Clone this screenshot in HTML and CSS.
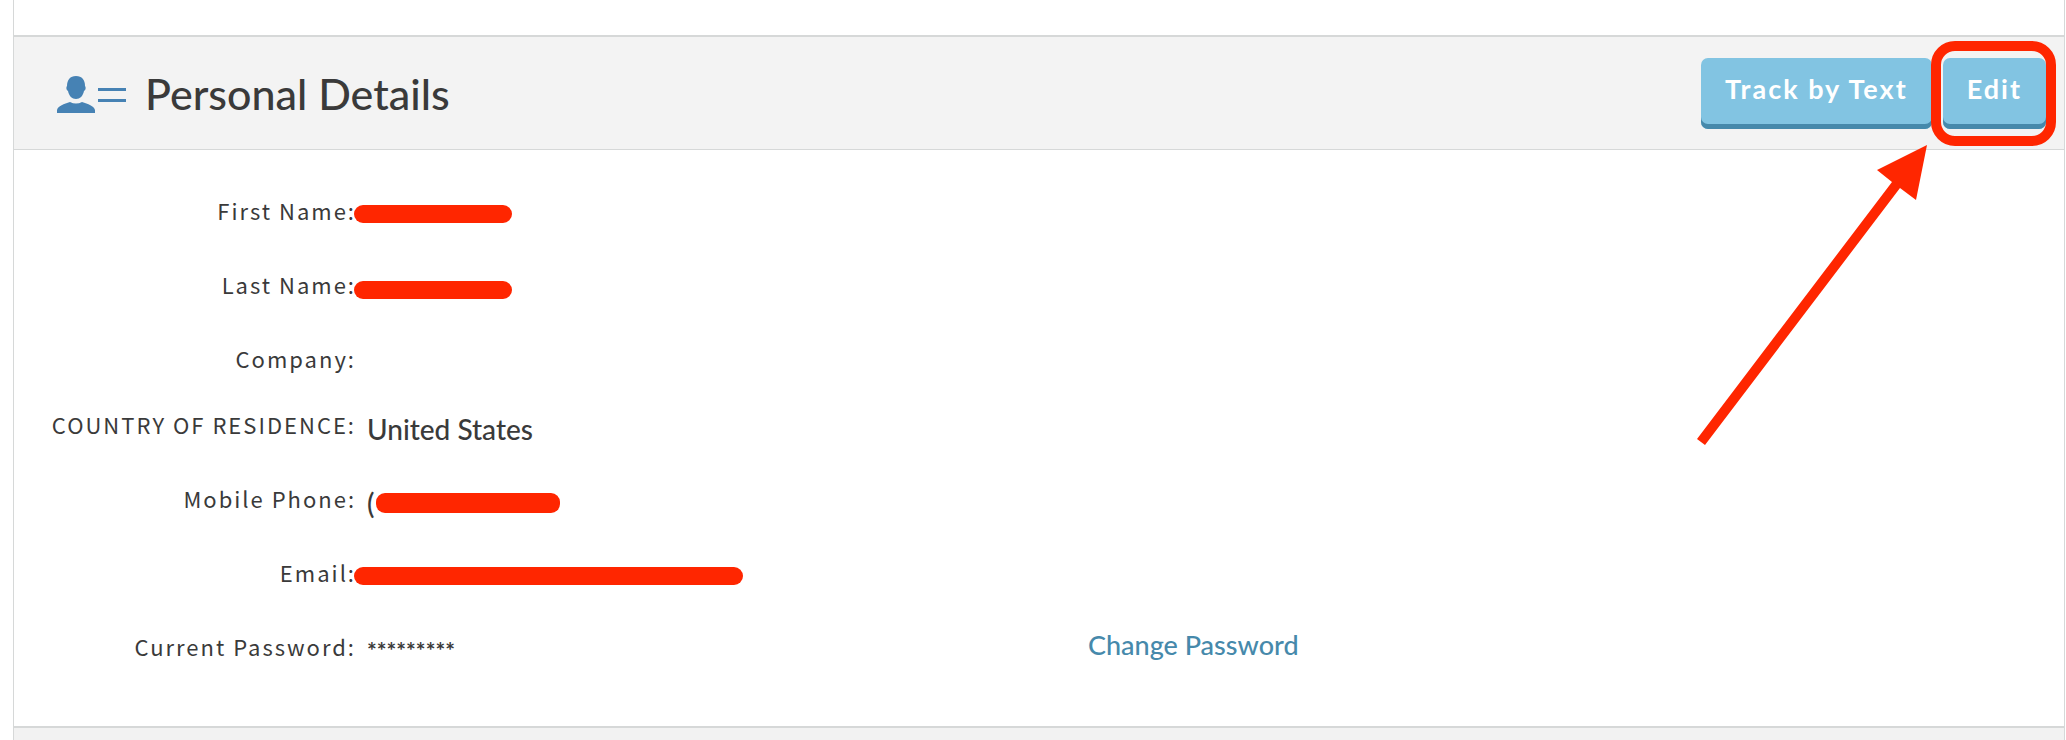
FILE: index.html
```html
<!DOCTYPE html>
<html lang="en">
<head>
<meta charset="utf-8">
<title>Personal Details</title>
<link rel="stylesheet" href="styles.css">
</head>
<body>
<main class="panel">
  <section class="section">
    <header class="section-header">
      <svg class="section-icon" viewBox="0 0 70 38" aria-hidden="true">
        <path d="M19 0c6 0 9 4 9 10 1 1 1 4-1 5-1 5-4 8-8 8s-7-3-8-8c-2-1-2-4-1-5 0-6 3-10 9-10z"/>
        <path d="M0 37v-3c1-4 7-6 13-8 4 2 8 2 12 0 6 2 12 4 13 8v3z"/>
        <path d="M41 12h28v3H41zM41 23h28v3H41z"/>
      </svg>
      <h1 class="section-title">Personal Details</h1>
      <div class="actions">
        <button class="button" type="button">Track by Text</button>
        <div class="highlighted">
          <button class="button" type="button">Edit</button>
          <span class="highlight-frame"></span>
          <svg class="highlight-arrow" viewBox="0 0 232 302" aria-hidden="true">
            <path d="M231 0l-11 55-16-12L9 300l-8-6L196 37l-15-12z"/>
          </svg>
        </div>
      </div>
    </header>
    <dl class="details">
      <div class="row"><dt class="label">First Name:</dt><dd class="value"><span class="redaction name"></span></dd></div>
      <div class="row"><dt class="label">Last Name:</dt><dd class="value"><span class="redaction name low"></span></dd></div>
      <div class="row short"><dt class="label">Company:</dt><dd class="value"></dd></div>
      <div class="row"><dt class="label">COUNTRY OF RESIDENCE:</dt><dd class="value">United States</dd></div>
      <div class="row"><dt class="label">Mobile Phone:</dt><dd class="value">(<span class="redaction phone"></span></dd></div>
      <div class="row"><dt class="label">Email:</dt><dd class="value"><span class="redaction email"></span></dd></div>
      <div class="row"><dt class="label">Current Password:</dt><dd class="value password">*********</dd><dd class="extra"><a class="link" href="#">Change Password</a></dd></div>
    </dl>
  </section>
  <section class="section next"></section>
</main>
</body>
</html>
```
FILE: styles.css
```css
* { box-sizing: border-box; }

body {
  margin: 0;
  background: #fff;
  color: #3a3a3a;
  font-family: Lato, "Open Sans", sans-serif;
}

.panel {
  display: flex;
  flex-direction: column;
  min-height: 100vh;
  margin: 0 1px 0 13px;
  padding-top: 35px;
  border: solid #d6d8d8;
  border-width: 0 1px;
}

.section { border-top: 2px solid #d6d8d8; }
.section.next { flex: 1; background: #f2f2f2; }

.section-header {
  display: flex;
  align-items: center;
  height: 113px;
  padding: 0 18px 0 43px;
  background: #f3f3f3;
  border-bottom: 1px solid #d6d8d8;
}

.section-icon { width: 70px; height: 38px; margin-top: 4px; fill: #4682b4; }

.section-title {
  margin: 0 auto 0 18px;
  padding-top: 2px;
  font-size: 43px;
  line-height: 50px;
  font-weight: 500;
}

.actions { display: flex; gap: 11px; }

.button {
  display: block;
  height: 71px;
  padding: 0 24px 8px;
  border: 0;
  border-radius: 7px;
  background: #82c4e2;
  box-shadow: inset 0 -5px #4689ab;
  color: #fff;
  font: 700 27px/30px Lato, sans-serif;
  letter-spacing: 2px;
}

.highlighted { position: relative; }

.highlight-frame {
  position: absolute;
  inset: -17px -10px -17px -12px;
  border: 10px solid #ff2600;
  border-radius: 24px;
  pointer-events: none;
}

.highlight-arrow {
  position: absolute;
  top: 87px;
  right: 118px;
  width: 232px;
  height: 302px;
  fill: #ff2600;
  pointer-events: none;
}

.details { margin: 0; padding: 46px 0 20px; }

.row {
  display: grid;
  grid-template-columns: 342px 3fr 4fr;
  height: 74px;
}
.row.short { height: 66px; }

.label {
  font: 400 22px/28px "Noto Sans CJK SC", sans-serif;
  letter-spacing: 2px;
  text-align: right;
  white-space: nowrap;
}

.value, .extra { margin: 0; font-size: 28px; line-height: 32px; font-weight: 500; }
.value { position: relative; padding: 3px 0 0 11px; }
.value.password { padding-top: 2px; font-size: 23px; font-weight: 700; }
.extra { margin-top: -3px; font-size: 27px; }

.link { color: #4689ab; text-decoration: none; }

.redaction {
  position: absolute;
  top: 9px;
  left: -2px;
  height: 18px;
  border-radius: 9px;
  background: #ff2600;
}
.redaction.name { width: 158px; }
.redaction.low { top: 11px; }
.redaction.phone { left: 20px; width: 184px; height: 20px; }
.redaction.email { width: 389px; }
```
